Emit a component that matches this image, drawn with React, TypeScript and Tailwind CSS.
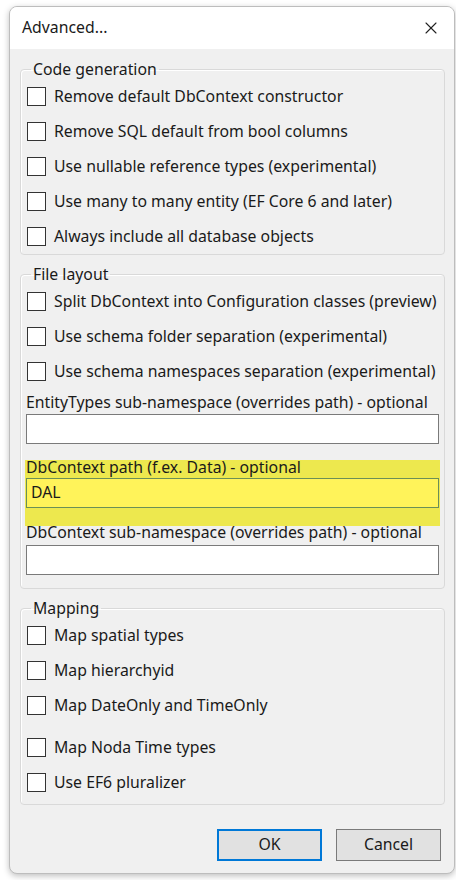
import { X } from 'lucide-react';

type Item = { label: string; gap?: boolean };

function Check({ label, gap }: Item) {
  return (
    <div className={`flex items-center gap-[8px] h-[35px] ${gap ? 'mt-[7px]' : ''}`}>
      <span className="w-[19px] h-[19px] border border-[#333] bg-white shrink-0" />
      <span className="whitespace-nowrap">{label}</span>
    </div>
  );
}

function Group({ title, children }: { title: string; children: React.ReactNode }) {
  return (
    <fieldset className="border border-[#d9d9d9] rounded-[4px] shadow-[inset_1px_1px_0_#ffffff] px-[6px] pb-0">
      <legend className="ml-[4px] px-[2px] leading-[20px]">{title}</legend>
      {children}
    </fieldset>
  );
}

export default function App() {
  const codeGen = [
    'Remove default DbContext constructor',
    'Remove SQL default from bool columns',
    'Use nullable reference types (experimental)',
    'Use many to many entity (EF Core 6 and later)',
    'Always include all database objects',
  ];
  const layout = [
    'Split DbContext into Configuration classes (preview)',
    'Use schema folder separation (experimental)',
    'Use schema namespaces separation (experimental)',
  ];

  return (
    <div className="w-[456px] h-[880px] bg-white pt-[6px] pl-[9px] text-[15.8px] text-[#1a1a1a] font-['Noto_Sans',sans-serif]">
      <div className="w-[446px] h-[868px] rounded-[8px] border border-[#bdbdbd] bg-[#f0f0f0] overflow-hidden shadow-[0_2px_6px_rgba(0,0,0,0.25)] flex flex-col">
        <div className="h-[42px] bg-white flex items-center justify-between pl-[12px] pr-[13px] shrink-0">
          <span>Advanced...</span>
          <X size={20} strokeWidth={1.3} className="text-[#222]" />
        </div>

        <div className="pl-[10px] pr-[9px] pt-[10px] flex flex-col gap-[9px]">
          <Group title="Code generation">
            {codeGen.map((c) => (
              <Check key={c} label={c} />
            ))}
          </Group>

          <Group title="File layout">
            {layout.map((c) => (
              <Check key={c} label={c} />
            ))}
            <div className="-mx-[1px] flex flex-col">
              <div className="leading-[20px] mt-[3px]">EntityTypes sub-namespace (overrides path) - optional</div>
              <div className="h-[30px] mt-[2px] bg-white border border-[#7a7a7a]" />
              <div className="bg-[#ede84e] -mx-[1px] mt-[16px] px-[1px] pb-[18px] flex flex-col">
                <div className="leading-[14px]">DbContext path (f.ex. Data) - optional</div>
                <div className="h-[30px] mt-[4px] bg-[#fff35a] border border-[#6b8f57] flex items-center pl-[4px]">DAL</div>
              </div>
              <div className="leading-[20px] -mt-[4px]">DbContext sub-namespace (overrides path) - optional</div>
              <div className="h-[30px] mt-[3px] mb-[13px] bg-white border border-[#7a7a7a]" />
            </div>
          </Group>

          <Group title="Mapping">
            <Check label="Map spatial types" />
            <Check label="Map hierarchyid" />
            <Check label="Map DateOnly and TimeOnly" />
            <Check label="Map Noda Time types" gap />
            <div className="pb-[4px]">
              <Check label="Use EF6 pluralizer" />
            </div>
          </Group>

          <div className="flex justify-end gap-[14px] mt-[15px] pr-[4px]">
            <button className="w-[105px] h-[32px] bg-[#e1e1e1] border-2 border-[#0078d7] text-[#1a1a1a]">OK</button>
            <button className="w-[105px] h-[32px] bg-[#e1e1e1] border border-[#7a7a7a] text-[#1a1a1a]">Cancel</button>
          </div>
        </div>
      </div>
    </div>
  );
}
